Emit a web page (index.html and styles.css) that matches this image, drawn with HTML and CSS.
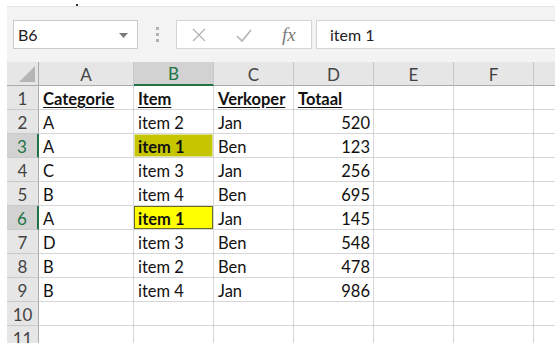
FILE: index.html
```html
<!DOCTYPE html>
<html>
<head>
<meta charset="utf-8">
<link rel="stylesheet" href="styles.css">
</head>
<body>
<div class="app">
  <span class="dot"></span>
  <div class="fbar">
    <div class="namebox"><span class="ref">B6</span><svg class="dd" width="9" height="5" viewBox="0 0 9 5"><path d="M0 0h9L4.5 5z" fill="#7a7a7a"/></svg></div>
    <div class="grip"><i></i><i></i><i></i></div>
    <div class="btns">
      <svg class="ico" width="16" height="16" viewBox="0 0 16 16"><path d="M2 2L14 14M14 2L2 14" stroke="#b4b4b4" stroke-width="1.4" fill="none"/></svg>
      <svg class="ico" width="18" height="16" viewBox="0 0 18 16"><path d="M2 9L7 14L16 3" stroke="#b4b4b4" stroke-width="1.6" fill="none"/></svg>
      <span class="fx">fx</span>
    </div>
    <div class="input">item 1</div>
  </div>
  <div class="sheet">
    <div class="h corner"><span class="tri"></span></div>
    <div class="h col">A</div>
    <div class="h col act">B</div>
    <div class="h col">C</div>
    <div class="h col">D</div>
    <div class="h col">E</div>
    <div class="h col">F</div>
    <div class="h col last"></div>

    <div class="h rh">1</div><div class="c b">Categorie</div><div class="c b">Item</div><div class="c b">Verkoper</div><div class="c b">Totaal</div><div class="c"></div><div class="c"></div><div class="c last"></div>
    <div class="h rh">2</div><div class="c">A</div><div class="c">item 2</div><div class="c">Jan</div><div class="c n">520</div><div class="c"></div><div class="c"></div><div class="c last"></div>
    <div class="h rh act">3</div><div class="c">A</div><div class="c hl1">item 1</div><div class="c">Ben</div><div class="c n">123</div><div class="c"></div><div class="c"></div><div class="c last"></div>
    <div class="h rh">4</div><div class="c">C</div><div class="c">item 3</div><div class="c">Jan</div><div class="c n">256</div><div class="c"></div><div class="c"></div><div class="c last"></div>
    <div class="h rh">5</div><div class="c">B</div><div class="c">item 4</div><div class="c">Ben</div><div class="c n">695</div><div class="c"></div><div class="c"></div><div class="c last"></div>
    <div class="h rh act">6</div><div class="c">A</div><div class="c hl2">item 1</div><div class="c">Jan</div><div class="c n">145</div><div class="c"></div><div class="c"></div><div class="c last"></div>
    <div class="h rh">7</div><div class="c">D</div><div class="c">item 3</div><div class="c">Ben</div><div class="c n">548</div><div class="c"></div><div class="c"></div><div class="c last"></div>
    <div class="h rh">8</div><div class="c">B</div><div class="c">item 2</div><div class="c">Ben</div><div class="c n">478</div><div class="c"></div><div class="c"></div><div class="c last"></div>
    <div class="h rh">9</div><div class="c">B</div><div class="c">item 4</div><div class="c">Jan</div><div class="c n">986</div><div class="c"></div><div class="c"></div><div class="c last"></div>
    <div class="h rh">10</div><div class="c"></div><div class="c"></div><div class="c"></div><div class="c"></div><div class="c"></div><div class="c"></div><div class="c last"></div>
    <div class="h rh">11</div><div class="c"></div><div class="c"></div><div class="c"></div><div class="c"></div><div class="c"></div><div class="c"></div><div class="c last"></div>
  </div>
</div>
</body>
</html>
```
FILE: styles.css
```css
* { box-sizing: border-box; }
html, body { margin: 0; padding: 0; background: #fff; }
body { font-family: Lato, "Liberation Sans", sans-serif; color: #111; }

.app {
  position: relative;
  width: 548px;
  margin: 0 0 0 7px;
  padding-top: 6px;
}
.dot {
  position: absolute;
  left: 69px;
  top: 4px;
  width: 2px;
  height: 2px;
  background: #333;
}

.fbar {
  height: 56px;
  background: #f3f3f3;
  border-top: 1px solid #e4e4e4;
  display: flex;
  align-items: center;
  padding-left: 6px;
}
.namebox {
  width: 125px;
  height: 29px;
  background: #fff;
  border: 1px solid #c9c9c9;
  display: flex;
  align-items: center;
  justify-content: space-between;
  padding: 0 9px 0 4px;
  font-size: 16px;
  color: #222;
}
.dd { margin-top: 1px; }
.grip {
  width: 38px;
  display: flex;
  flex-direction: column;
  align-items: center;
  gap: 3px;
}
.grip i {
  width: 3px;
  height: 3px;
  background: #b2b2b2;
  display: block;
}
.btns {
  width: 136px;
  height: 29px;
  background: #fff;
  border: 1px solid #d4d4d4;
  display: flex;
  align-items: center;
  padding-left: 14px;
  gap: 28px;
}
.fx {
  font-family: "Liberation Serif", "DejaVu Serif", serif;
  font-style: italic;
  font-size: 19px;
  color: #7a7a7a;
  margin-left: 1px;
}
.input {
  flex: 1;
  height: 29px;
  margin-left: 4px;
  background: #fff;
  border: 1px solid #d4d4d4;
  border-right: none;
  display: flex;
  align-items: center;
  padding-left: 13px;
  font-size: 16px;
  color: #222;
}

.sheet {
  display: grid;
  grid-template-columns: 32px 95px repeat(5, 80px) 21px;
  grid-auto-rows: 24px;
  height: 281px;
  overflow: hidden;
}
.c {
  border-right: 1px solid #d6d6d6;
  border-bottom: 1px solid #d6d6d6;
  font-size: 16.5px;
  line-height: 23px;
  padding: 2px 0 0 4px;
  white-space: nowrap;
  overflow: visible;
  color: #111;
}
.c.last { border-right: none; }
.c.n { text-align: right; padding-right: 3px; }
.c.b { font-weight: bold; text-decoration: underline; text-underline-offset: 2px; }

.h {
  background: #e6e6e6;
  border-right: 1px solid #c9c9c9;
  border-bottom: 1px solid #c9c9c9;
  color: #444;
  font-size: 17px;
  display: flex;
  align-items: center;
  justify-content: center;
}
.h.col { border-bottom: 1px solid #ababab; padding-top: 1px; }
.h.col.act {
  background: #d2d2d2;
  color: #217346;
  border-bottom: 2px solid #217346;
}
.h.last { border-right: none; }
.h.rh { border-right: 1px solid #ababab; padding-top: 2px; }
.h.rh.act {
  background: #d2d2d2;
  color: #217346;
  border-right: 2px solid #217346;
}
.corner {
  position: relative;
  border-bottom: 1px solid #ababab;
  border-right: 1px solid #ababab;
}
.tri {
  position: absolute;
  right: 3px;
  bottom: 3px;
  width: 0;
  height: 0;
  border-left: 16px solid transparent;
  border-bottom: 16px solid #b5b5b5;
}

.hl1 {
  background: #c6c600;
  font-weight: bold;
  box-shadow: inset 0 0 0 1px #e2e29a;
}
.hl2 {
  background: #ffff00;
  font-weight: bold;
  box-shadow: inset 0 0 0 1px #6a6a2a;
}
```
